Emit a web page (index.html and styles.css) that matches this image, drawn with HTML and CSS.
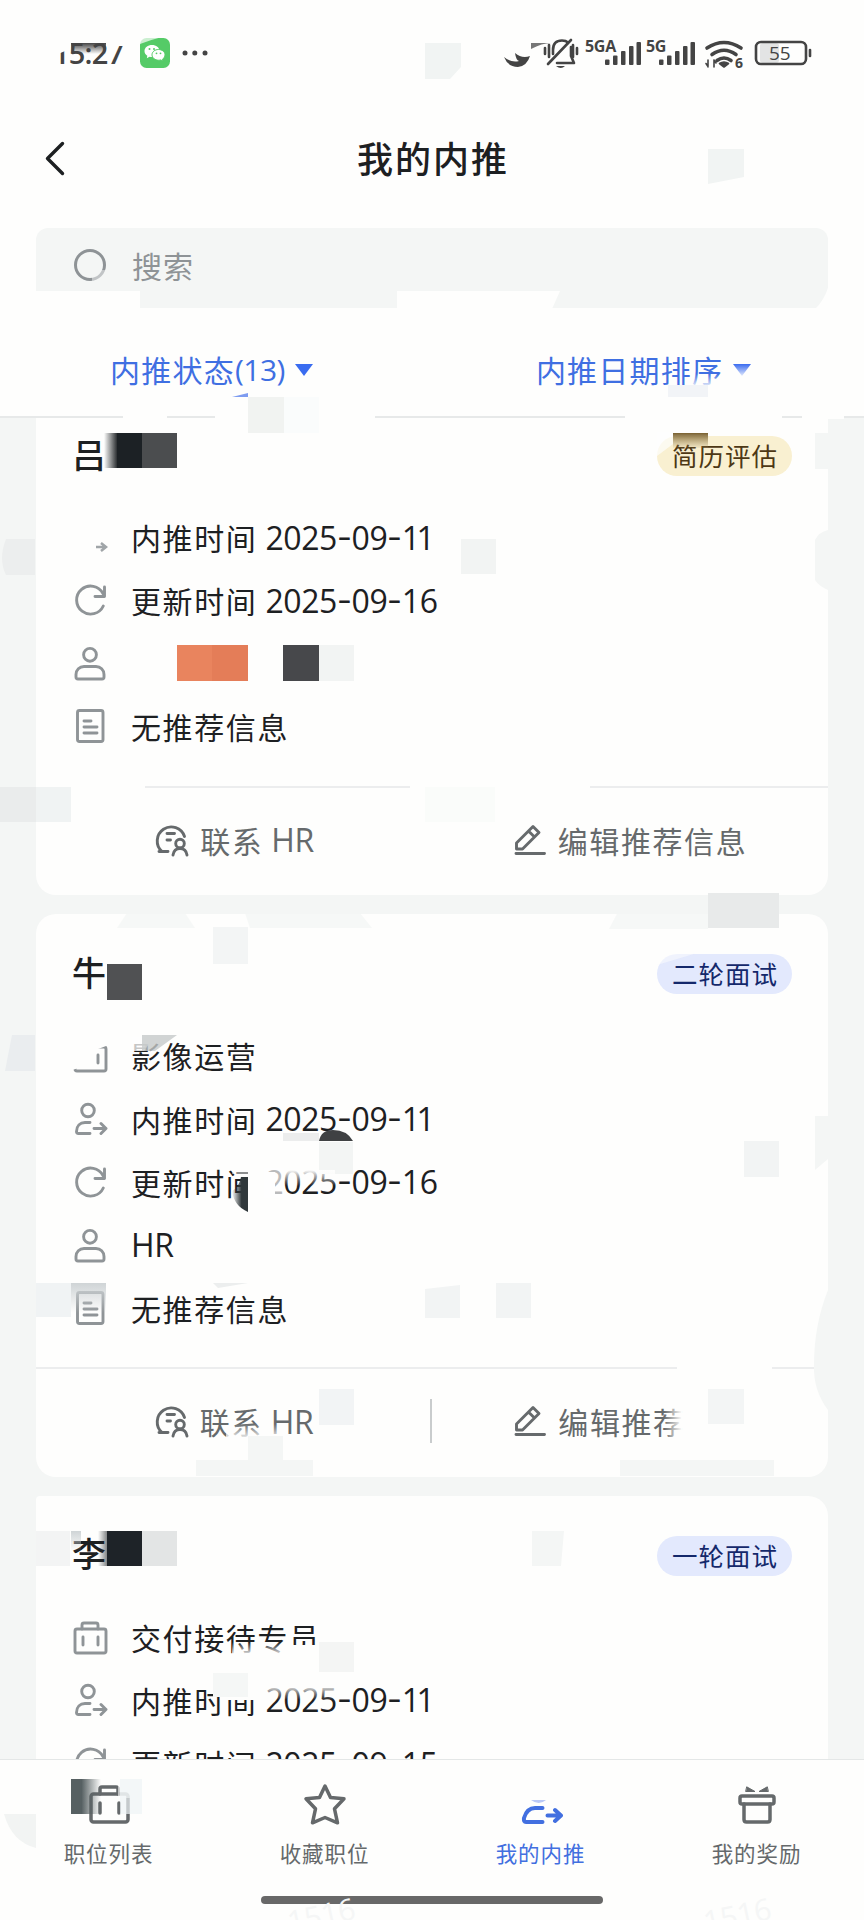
FILE: index.html
```html
<!DOCTYPE html>
<html lang="zh-CN">
<head>
    <meta charset="UTF-8">
    <meta name="viewport" content="width=device-width, initial-scale=1.0">
    <title>我的内推</title>
    <link rel="stylesheet" href="styles.css">
</head>
<body>
    <!-- icon sprite -->
    <svg class="sprite">
        <symbol id="i-job" viewBox="0 0 36 36">
            <rect x="3" y="9" width="31" height="24" rx="2"/>
            <path d="M10 9V5q0-2 2-2h12q2 0 2 2v4M11 17v8M26 17v8"/>
        </symbol>
        <symbol id="i-refer" viewBox="0 0 36 36">
            <circle cx="16" cy="8.5" r="6.3"/>
            <path d="M18 20.5h-5C8 20.5 4.5 24 4.5 29.500q0 2 2 2H18M22 26.500h12M29 21.500l5 5-5 5"/>
        </symbol>
        <symbol id="i-update" viewBox="0 0 36 36">
            <path d="M31.300 23A14 14 0 1 1 31 10.500M32.500 4v9.500H23"/>
        </symbol>
        <symbol id="i-person" viewBox="0 0 36 36">
            <circle cx="18" cy="8.800" r="6.400"/>
            <path d="M12 20.500h12a8 8 0 0 1 8 8V31q0 2-2 2H6q-2 0-2-2v-2.500a8 8 0 0 1 8-8z"/>
        </symbol>
        <symbol id="i-doc" viewBox="0 0 36 36">
            <rect x="5.500" y="1.500" width="25.500" height="31" rx="2"/>
            <path d="M12 12h7M12 18h13M12 24h13"/>
        </symbol>
        <symbol id="i-hr" viewBox="0 0 36 36">
            <path d="M31.500 13.500A14 14 0 1 0 9 28.500H6.500M6 28.500h9M14 10.500h7.500M14 17h3.500"/>
            <circle cx="27" cy="20.500" r="4.300"/>
            <path d="M20 32q1-6.500 7-6.500T34 32"/>
        </symbol>
        <symbol id="i-edit" viewBox="0 0 32 36">
            <path d="M2.500 20L19 3.500l6 6L8.500 26h-6zM14.500 8l6 6M2 30.500h28.500"/>
        </symbol>
        <symbol id="i-star" viewBox="0 0 44 44">
            <path d="M22 4l5.500 11.500 13.500 1.300-9.500 10 3 14L22 35.500 9.500 40.800l3-14-9.500-10 13.500-1.300z"/>
        </symbol>
        <symbol id="i-tabjob" viewBox="0 0 44 44">
            <rect x="4" y="12" width="37" height="28" rx="2.500"/>
            <path d="M13 12V7q0-2 2-2h14q2 0 2 2v5M13 21v10M32 21v10"/>
        </symbol>
        <symbol id="i-tabrefer" viewBox="0 0 44 44">
            <path d="M23.500 26H16q-8 0-11 10-.5 4 2 4h16.500M28.500 33.500h13M36 28l6 5.500-6 5.500" stroke-width="4"/>
            <path d="M12 18h15q-7 6-15 0z" fill="#b9c8f6" stroke="none"/>
        </symbol>
        <symbol id="i-gift" viewBox="0 0 44 44">
            <rect x="5" y="14" width="34" height="8" rx="2"/>
            <path d="M9 22v15.500q0 2.500 2.500 2.500h21q2.500 0 2.500-2.500V22"/>
            <path d="M12 5l8 4.500h-9zM32 5l-8 4.500h9z" fill="currentColor" stroke-width="1"/>
        </symbol>
    </svg>

    <div class="app">
        <header class="head">
            <div class="status">
                <span class="clock">15:27</span>
                <svg class="wechat" viewBox="0 0 30 30">
                    <rect width="30" height="30" rx="6.500" fill="#55cb67"/>
                    <path d="M12 7c-4.200 0-7.500 2.600-7.500 6 0 2 1 3.700 2.800 4.800l-.5 2.400 2.700-1.400q1.200.3 2.500.3c4.200 0 7.500-2.700 7.500-6.100S16.200 7 12 7z" fill="#fff"/>
                    <path d="M18.500 11.500c-3.600 0-6.500 2.300-6.500 5.300s2.900 5.400 6.500 5.400q1.200 0 2.200-.3l2.300 1.200-.4-2c1.500-1 2.400-2.500 2.400-4.300 0-3-2.900-5.300-6.500-5.300z" fill="#fff" stroke="#55cb67"/>
                    <g fill="#55cb67"><circle cx="9.500" cy="11" r="1"/><circle cx="14" cy="11" r="1"/><circle cx="16.500" cy="15.300" r=".9"/><circle cx="20.500" cy="15.300" r=".9"/></g>
                </svg>
                <svg class="dots" viewBox="0 0 26 6"><circle cx="3" cy="3" r="2.500"/><circle cx="12.800" cy="3" r="2.500"/><circle cx="23" cy="3" r="2.500"/></svg>
                <svg class="signals" viewBox="500 30 320 46">
                    <path d="M504 57q4 10 14 10 9-1 12-11-8 3-15-3 1 7 4 8-8 2-15-4z"/>
                    <path d="M531 43h20q-9 0-20 6z" fill="#777"/>
                    <path d="M553 54v-4q0-9.500 9-9.500 4 0 6 2M571 47v9l3 7h-17M571 40l-23 24M545 48v6M549 45v12M577 48v6M573 45v12" class="ln"/>
                    <path d="M556 66h9q-4 4-9 0z"/>
                    <text x="585" y="51.500" class="net">5GA</text>
                    <g id="bars"><rect x="605" y="59.500" width="4.500" height="5.500" rx="1"/><rect x="613" y="55.500" width="4.500" height="9.500" rx="1"/><rect x="621" y="51" width="4.500" height="14" rx="1"/><rect x="629" y="46" width="4.500" height="19" rx="1"/><rect x="636.500" y="42" width="4.500" height="23" rx="1"/></g>
                    <text x="646" y="51.500" class="net">5G</text>
                    <use href="#bars" x="54"/>
                    <path d="M707 48q17-11 34 0M712 54.500q12-8.500 24 0M717 60.500q7-5 14 0" class="ln" stroke-width="4"/>
                    <path d="M719.500 63.500q4.500-3 9 0l-4.500 3.500zM708 60v7M706 63.500l2 3M714 67v-7M716 63l-2-3" class="ln thin"/>
                    <text x="735" y="68" class="net small">6</text>
                    <rect x="760" y="43" width="19" height="20" rx="3" fill="#e3e4e4"/>
                    <rect x="756" y="42" width="50" height="22" rx="5" class="ln"/>
                    <path d="M810 50v6" class="ln" stroke-width="3"/>
                    <text x="769" y="60" class="pct">55</text>
                </svg>
            </div>
            <div class="title">
                <svg class="back" viewBox="0 0 20 36"><path d="M17.500 2.500L2.500 17.500l15 15"/></svg>
                <h1>我的内推</h1>
            </div>
            <div class="search">
                <svg class="lens" viewBox="0 0 34 34"><circle cx="17" cy="17" r="14.500"/></svg>
                <span>搜索</span>
            </div>
            <div class="filters">
                <div class="filter">内推状态<span class="num">(13)</span><i class="caret"></i></div>
                <div class="filter">内推日期排序<i class="caret"></i></div>
            </div>
        </header>

        <main class="list">
            <section class="card first">
                <div class="card-top"><h2>吕</h2><span class="tag yellow">简历评估</span></div>
                <ul class="rows">
                    <li><svg class="hidden"></svg>内推时间<span class="date">2025<i>-</i>09<i>-</i><b>11</b></span></li>
                    <li><svg><use href="#i-update"/></svg>更新时间<span class="date">2025<i>-</i>09<i>-</i>16</span></li>
                    <li><svg><use href="#i-person"/></svg></li>
                    <li><svg><use href="#i-doc"/></svg>无推荐信息</li>
                </ul>
                <div class="actions">
                    <div class="action"><svg><use href="#i-hr"/></svg>联系<span class="hr">HR</span></div>
                    <div class="action"><svg class="pen"><use href="#i-edit"/></svg>编辑推荐信息</div>
                </div>
            </section>

            <section class="card">
                <div class="card-top"><h2>牛</h2><span class="tag">二轮面试</span></div>
                <ul class="rows">
                    <li><svg><use href="#i-job"/></svg>影像运营</li>
                    <li><svg><use href="#i-refer"/></svg>内推时间<span class="date">2025<i>-</i>09<i>-</i><b>11</b></span></li>
                    <li><svg><use href="#i-update"/></svg>更新时间<span class="date">2025<i>-</i>09<i>-</i>16</span></li>
                    <li><svg><use href="#i-person"/></svg><span class="latin">HR</span></li>
                    <li><svg><use href="#i-doc"/></svg>无推荐信息</li>
                </ul>
                <div class="actions split">
                    <div class="action"><svg><use href="#i-hr"/></svg>联系<span class="hr">HR</span></div>
                    <div class="action"><svg class="pen"><use href="#i-edit"/></svg>编辑推荐<span class="gone"></span></div>
                </div>
            </section>

            <section class="card last">
                <div class="card-top"><h2>李</h2><span class="tag">一轮面试</span></div>
                <ul class="rows">
                    <li><svg><use href="#i-job"/></svg>交付接待专员</li>
                    <li><svg><use href="#i-refer"/></svg>内推时间<span class="date">2025<i>-</i>09<i>-</i><b>11</b></span></li>
                    <li><svg><use href="#i-update"/></svg>更新时间<span class="date">2025<i>-</i>09<i>-</i>15</span></li>
                </ul>
            </section>
        </main>

        <nav class="tabs">
            <div class="tab"><svg><use href="#i-tabjob"/></svg>职位列表</div>
            <div class="tab"><svg><use href="#i-star"/></svg>收藏职位</div>
            <div class="tab active"><svg><use href="#i-tabrefer"/></svg>我的内推</div>
            <div class="tab"><svg><use href="#i-gift"/></svg>我的奖励</div>
            <div class="home-bar"></div>
        </nav>

        <!-- mosaic tiles over names, contacts and the watermark -->
        <svg class="mosaic" viewBox="0 0 864 1920">
            <defs>
                <linearGradient id="fadeR"><stop offset="0" stop-color="#fefefd" stop-opacity="0"/><stop offset="1" stop-color="#fefefd"/></linearGradient>
                <linearGradient id="fadeT" x2="0" y2="1"><stop offset="0" stop-color="#fefefd"/><stop offset="1" stop-color="#fefefd" stop-opacity="0"/></linearGradient>
                <linearGradient id="fadeB" x2="0" y2="1"><stop offset="0" stop-color="#fefefd" stop-opacity="0"/><stop offset="1" stop-color="#fefefd"/></linearGradient>
                <linearGradient id="ink" x2="0" y2="1"><stop offset="0" stop-color="#444"/><stop offset="1" stop-color="#444" stop-opacity="0"/></linearGradient>
                <linearGradient id="brown" x2="0" y2="1"><stop offset="0" stop-color="#79602f"/><stop offset="1" stop-color="#a58d55" stop-opacity=".1"/></linearGradient>
                <linearGradient id="nameL"><stop offset="0" stop-color="#1c2023" stop-opacity="0"/><stop offset="1" stop-color="#1c2023"/></linearGradient>
                <linearGradient id="slate"><stop offset=".35" stop-color="#566062"/><stop offset="1" stop-color="#566062" stop-opacity="0"/></linearGradient>
                <linearGradient id="cloud" x2="0" y2="1"><stop offset="0" stop-color="#cfd4d6"/><stop offset="1" stop-color="#cfd4d6" stop-opacity="0"/></linearGradient>
                <linearGradient id="blob"><stop offset="0" stop-color="#30383b" stop-opacity="0"/><stop offset=".6" stop-color="#30383b"/></linearGradient>
            </defs>

            <!-- status bar and header -->
            <g class="paper">
                <path d="M54 38h16v11l-12 5h-4zM107 38h20v8h-20z"/>
                <path d="M36 291h104v18H36zM397 291h163l-8 18H397zM815 309q9-8 14-24v24z"/>
                <path d="M123 414h44v5h-44zM215 414h160v5H215zM625 414h157v5H625zM802 414h42v5h-42z"/>
            </g>
            <path d="M140 37h22q-12 3-22 7z" fill="#fefefd" opacity=".7"/>
            <rect x="71" y="43" width="35" height="11" fill="url(#ink)"/>
            <path d="M425 43h36v24l-11 12h-25zM708 149h36v28l-36 7z" fill="#f1f4f3"/>
            <path d="M92 270h14v12H92z" fill="#f4f6f5" opacity=".5"/>
            <rect x="690" y="374" width="35" height="14" fill="url(#fadeB)"/>
            <rect x="732" y="364" width="22" height="14" fill="url(#fadeB)"/>
            <path d="M668 385h40v12h-40z" fill="#f2f4f7"/>
            <path d="M232 397q8-2 16-4v4z" fill="#7e9cf0"/>
            <rect x="248" y="397" width="36" height="36" fill="#f1f3f1"/>
            <rect x="284" y="397" width="35" height="36" fill="#fafcfc"/>

            <!-- first card -->
            <rect x="104" y="433" width="14" height="35" fill="url(#nameL)"/>
            <rect x="117" y="433" width="25" height="35" fill="#1c2125"/>
            <rect x="142" y="433" width="35" height="35" fill="#4b4d4f"/>
            <path d="M657 432h16v12l-16 12z" class="paper" opacity=".7"/>
            <rect x="673" y="433" width="35" height="15" fill="url(#brown)"/>
            <path d="M815 433h13v36h-13zM815 540q4-8 13-10v60q-9-4-13-10z" fill="#f4f6f5"/>
            <path d="M6 539h29v36H6q-8-16 0-36z" fill="#eceeee"/>
            <path d="M96 547h9M101 543l5 4-5 4" fill="none" stroke="#a0a5a8" stroke-width="2.500"/>
            <rect x="461" y="539" width="35" height="35" fill="#f2f4f3"/>
            <rect x="177" y="645" width="36" height="36" fill="#e9845e"/>
            <rect x="212" y="645" width="36" height="36" fill="#e47d58"/>
            <rect x="283" y="645" width="36" height="36" fill="#47484b"/>
            <rect x="319" y="645" width="35" height="36" fill="#f2f4f3"/>
            <path d="M36 784h109v5H36zM410 784h180v5H410z" class="paper"/>
            <rect y="787" width="36" height="35" fill="#eaecec"/>
            <rect x="36" y="787" width="35" height="35" fill="#f0f3f3"/>
            <rect x="425" y="787" width="70" height="35" fill="#fafcfa"/>

            <!-- second card -->
            <path d="M127 913h58l10 15h-78zM245 913h115l12 15H250zM618 912h90v17h-99z" fill="#f4f6f5" opacity=".8"/>
            <rect x="708" y="893" width="71" height="35" fill="#e8eaea"/>
            <rect x="213" y="927" width="35" height="37" fill="#f3f5f5"/>
            <rect x="107" y="964" width="35" height="36" fill="#505153"/>
            <path d="M657 953h40l-40 12z" class="paper" opacity=".5"/>
            <path d="M12 1035h23v36H5z" fill="#eaedef"/>
            <path d="M72 1034h34v12l-13 5v13l-21 6z" class="paper"/>
            <path d="M132 1037h22l-10 14h-12z" class="paper" opacity=".75"/>
            <path d="M142 1035h35l-22 16h-13z" fill="#c6c9c9" opacity=".8"/>
            <path d="M283 1133h36v8h-36z" fill="#eceded"/>
            <path d="M319 1141q2-11 14-11 14 0 20 11z" fill="#3f4143"/>
            <rect x="319" y="1142" width="34" height="32" fill="#f3f5f4"/>
            <path d="M248 1172h27v36h-27z" class="paper"/>
            <rect x="264" y="1168" width="20" height="30" class="paper" opacity=".7"/>
            <rect x="232" y="1168" width="16" height="6" fill="#fefefd" opacity=".5"/>
            <path d="M241 1177h7v35q-14-6-16-21 7-4 9-14z" fill="url(#blob)"/>
            <rect x="283" y="1170" width="52" height="16" fill="url(#fadeT)"/>
            <path d="M744 1141h35v36h-35z" fill="#f2f4f4"/>
            <path d="M815 1116h13v43l-13 11z" fill="#f4f6f5"/>
            <path d="M36 1283h35v34H36z" fill="#f0f3f4"/>
            <rect x="71" y="1283" width="35" height="30" fill="url(#cloud)"/>
            <path d="M213 1283h35l-30 5z" fill="#eceeee"/>
            <path d="M425 1289l35-4v33h-35zM496 1283h35v35h-35z" fill="#f2f4f4"/>
            <path d="M677 1364h95v6h-95z" class="paper"/>
            <path d="M828 1290v120q-15-20-14-45 0-40 14-75z" fill="#f4f6f5"/>
            <rect x="664" y="1402" width="18" height="40" fill="url(#fadeR)"/>
            <rect x="319" y="1389" width="35" height="36" fill="#f2f4f5"/>
            <path d="M708 1389h36v35h-36z" fill="#f3f5f5"/>
            <rect x="226" y="1424" width="56" height="16" fill="url(#fadeB)"/>
            <path d="M248 1436h35v24h30v16H196v-16h52zM620 1460h154v16H620z" fill="#f4f6f5"/>

            <!-- third card -->
            <path d="M36 1531h34v35H36z" fill="#f3f4f4"/>
            <rect x="71" y="1531" width="10" height="20" fill="url(#cloud)"/>
            <rect x="98" y="1531" width="10" height="35" fill="url(#nameL)" opacity=".6"/>
            <rect x="107" y="1531" width="35" height="35" fill="#1e2328"/>
            <rect x="142" y="1531" width="35" height="35" fill="#e3e5e5"/>
            <path d="M532 1531h32l-3 35h-29z" fill="#f4f6f5"/>
            <rect x="232" y="1642" width="57" height="14" fill="url(#fadeB)"/>
            <rect x="288" y="1645" width="31" height="12" class="paper"/>
            <rect x="319" y="1642" width="35" height="30" fill="#f4f5f4"/>
            <path d="M220 1684h34v16h-34z" class="paper"/>
            <rect x="213" y="1673" width="35" height="24" fill="#f5f7f6"/>
            <rect x="263" y="1684" width="75" height="16" fill="url(#fadeT)"/>

            <!-- tab bar -->
            <path d="M4 1814h32v34Q12 1842 4 1814z" fill="#f2f4f3"/>
            <path d="M118 1780h24v18h-24z" fill="#fefefd" opacity=".6"/>
            <rect x="71" y="1779" width="30" height="35" fill="url(#slate)"/>
            <rect x="120" y="1779" width="22" height="35" fill="#eef3f5" opacity=".7"/>
            <text class="mark" transform="translate(290 1933) rotate(-12)">1516</text>
            <text class="mark" transform="translate(706 1933) rotate(-12)">1516</text>
        </svg>
    </div>
</body>
</html>
```
FILE: styles.css
```css
* {
    box-sizing: border-box;
}

body {
    margin: 0;
    background-color: #f4f6f5;
    font-family: "Noto Sans CJK SC", sans-serif;
    color: #1d2022;
}

h1, h2, ul {
    margin: 0;
    padding: 0;
    font-weight: 400;
    list-style: none;
}

svg {
    display: block;
    flex: none;
}

.sprite {
    position: absolute;
    width: 0;
    height: 0;
}

.app {
    position: relative;
    width: 864px;
    height: 1920px;
    overflow: hidden;
    display: flex;
    flex-direction: column;
}

/* header */
.head {
    position: relative;
    z-index: 1;
    flex: none;
    height: 418px;
    background-color: #fefefd;
    border-bottom: 2px solid #e7e9e9;
}

.status {
    display: flex;
    align-items: center;
    height: 106px;
    padding: 0 44px 0 53px;
}

.clock {
    width: 87px;
    font-family: "Open Sans", sans-serif;
    font-size: 29px;
    font-weight: 600;
    line-height: 40px;
    color: #444;
    letter-spacing: -0.8px;
}

.wechat {
    width: 30px;
    height: 30px;
}

.dots {
    width: 26px;
    height: 6px;
    margin-left: 12px;
    fill: #444;
}

.signals {
    width: 320px;
    height: 46px;
    margin-left: auto;
    fill: #444;
}

.ln {
    fill: none;
    stroke: #444;
    stroke-width: 2.6px;
    stroke-linecap: round;
    stroke-linejoin: round;
}

.ln[stroke-width="4"] {
    stroke-width: 3.6px;
}

.ln.thin {
    fill: #444;
    stroke-width: 1.6px;
}

.net {
    font: 700 16px "Open Sans", sans-serif;
    letter-spacing: -0.3px;
}

.net.small {
    font-size: 14px;
}

.pct {
    font: 400 19px "Open Sans", sans-serif;
}

.title {
    display: flex;
    align-items: center;
    height: 106px;
    padding: 0 45px;
}

.back {
    width: 20px;
    height: 36px;
    fill: none;
    stroke: #1d2022;
    stroke-width: 3.4;
    stroke-linecap: round;
    stroke-linejoin: round;
}

.title h1 {
    flex: 1;
    margin: -5px 18px 0 0;
    text-align: center;
    font-size: 36px;
    line-height: 50px;
    font-weight: 500;
    letter-spacing: 2px;
}

.search {
    display: flex;
    align-items: center;
    height: 80px;
    margin: 16px 36px 0;
    padding: 0 0 6px 37px;
    border-radius: 12px;
    background-color: #f4f6f5;
    font-size: 30px;
    color: #8e9396;
    letter-spacing: 1px;
}

.lens {
    width: 34px;
    height: 34px;
    margin-right: 25px;
    fill: none;
    stroke: #8e9396;
    stroke-width: 3;
}

.filters {
    display: flex;
    height: 108px;
    padding-top: 39px;
}

.filter {
    display: flex;
    justify-content: center;
    flex: 1;
    height: 44px;
    padding-right: 9px;
    align-items: center;
    font-size: 30px;
    letter-spacing: 1.2px;
    color: #3f6fe2;
}

.filter + .filter {
    padding: 0 9px 0 0;
}

.num {
    font-family: "Open Sans", sans-serif;
    letter-spacing: -0.5px;
}

.caret {
    margin: 2px 0 0 10px;
    border: 9px solid transparent;
    border-top: 12px solid #3a6cf0;
    border-bottom: 0;
}

/* list */
.list {
    flex: 1;
    min-height: 0;
    overflow: hidden;
    padding: 0 36px;
}

.card {
    margin-bottom: 19px;
    padding-top: 40px;
    border-radius: 20px;
    background-color: #fefefd;
}

.card.first {
    margin-top: -22px;
}

.card.last {
    border-top-left-radius: 4px;
}

.card-top {
    display: flex;
    justify-content: space-between;
    align-items: center;
    height: 40px;
    padding: 0 36px;
}

.card-top h2 {
    margin-top: -5px;
    font-size: 34px;
    font-weight: 500;
    line-height: 40px;
}

.tag {
    height: 40px;
    padding: 0 14px 0 15px;
    border-radius: 20px;
    background-color: #e3e9fd;
    font-size: 25.500px;
    line-height: 37px;
    letter-spacing: 1px;
    color: #14286b;
}

.tag.yellow {
    background-color: #f9f0d1;
    color: #4d3815;
}

.rows {
    padding: 29.500px 36px 28px;
}

.rows li {
    display: flex;
    align-items: center;
    height: 63.100px;
    font-size: 30px;
    letter-spacing: 1.600px;
    white-space: nowrap;
}

.rows svg {
    width: 36px;
    height: 36px;
    margin: 2px 23px 0 0;
    fill: none;
    stroke: #8f9497;
    stroke-width: 2.900;
    stroke-linecap: round;
    stroke-linejoin: round;
}

.date, .latin, .hr {
    font-family: "Open Sans", sans-serif;
    font-size: 32px;
    letter-spacing: -0.400px;
}

.date {
    margin-left: 8px;
}

.date i {
    display: inline-block;
    width: 14.500px;
    text-align: center;
    font-style: normal;
    transform: translateY(-2px) scaleX(1.35);
}

.date b {
    font-weight: 400;
    letter-spacing: -3.500px;
}

.actions {
    display: flex;
    align-items: center;
    height: 109.500px;
    padding-bottom: 4px;
    border-top: 2px solid #ecedee;
}

.action {
    display: flex;
    flex: 1;
    align-items: center;
    justify-content: center;
    height: 44px;
    font-size: 30px;
    letter-spacing: 1.600px;
    color: #666a6c;
}

.action + .action {
    padding-left: 2px;
}

.action svg {
    width: 36px;
    height: 36px;
    margin: 2px 11px 0 0;
    fill: none;
    stroke: #666a6c;
    stroke-width: 2.900;
    stroke-linecap: round;
    stroke-linejoin: round;
}

.action .pen {
    width: 32px;
    margin-right: 12px;
}

.hr {
    margin-left: 8px;
}

/* keeps the clipped label aligned with the full one */
.gone {
    width: 63px;
}

.split .action:first-child {
    border-right: 2px solid #c9cccd;
}

/* tab bar */
.tabs {
    position: relative;
    z-index: 1;
    display: flex;
    flex: none;
    height: 161px;
    border-top: 1px solid #e4e7e7;
    background-color: #fefefd;
}

.tab {
    display: flex;
    flex: 1;
    flex-direction: column;
    align-items: center;
    padding: 22px 0 0 1px;
    font-size: 21.500px;
    line-height: 30px;
    letter-spacing: 0.900px;
    color: #65696b;
}

.tab svg {
    width: 44px;
    height: 44px;
    margin-bottom: 12px;
    fill: none;
    stroke: currentColor;
    stroke-width: 3.500;
    stroke-linecap: round;
    stroke-linejoin: round;
}

.tab.active {
    color: #426fe0;
}

.home-bar {
    position: absolute;
    left: 261px;
    bottom: 16px;
    width: 342px;
    height: 8px;
    border-radius: 4px;
    background-color: #686868;
}

/* mosaic */
.mosaic {
    position: absolute;
    z-index: 2;
    top: 0;
    left: 0;
    width: 864px;
    height: 1920px;
    pointer-events: none;
}

.paper {
    fill: #fefefd;
}

.mark {
    font: 30px "Open Sans", sans-serif;
    fill: #f5f6f6;
}
```
